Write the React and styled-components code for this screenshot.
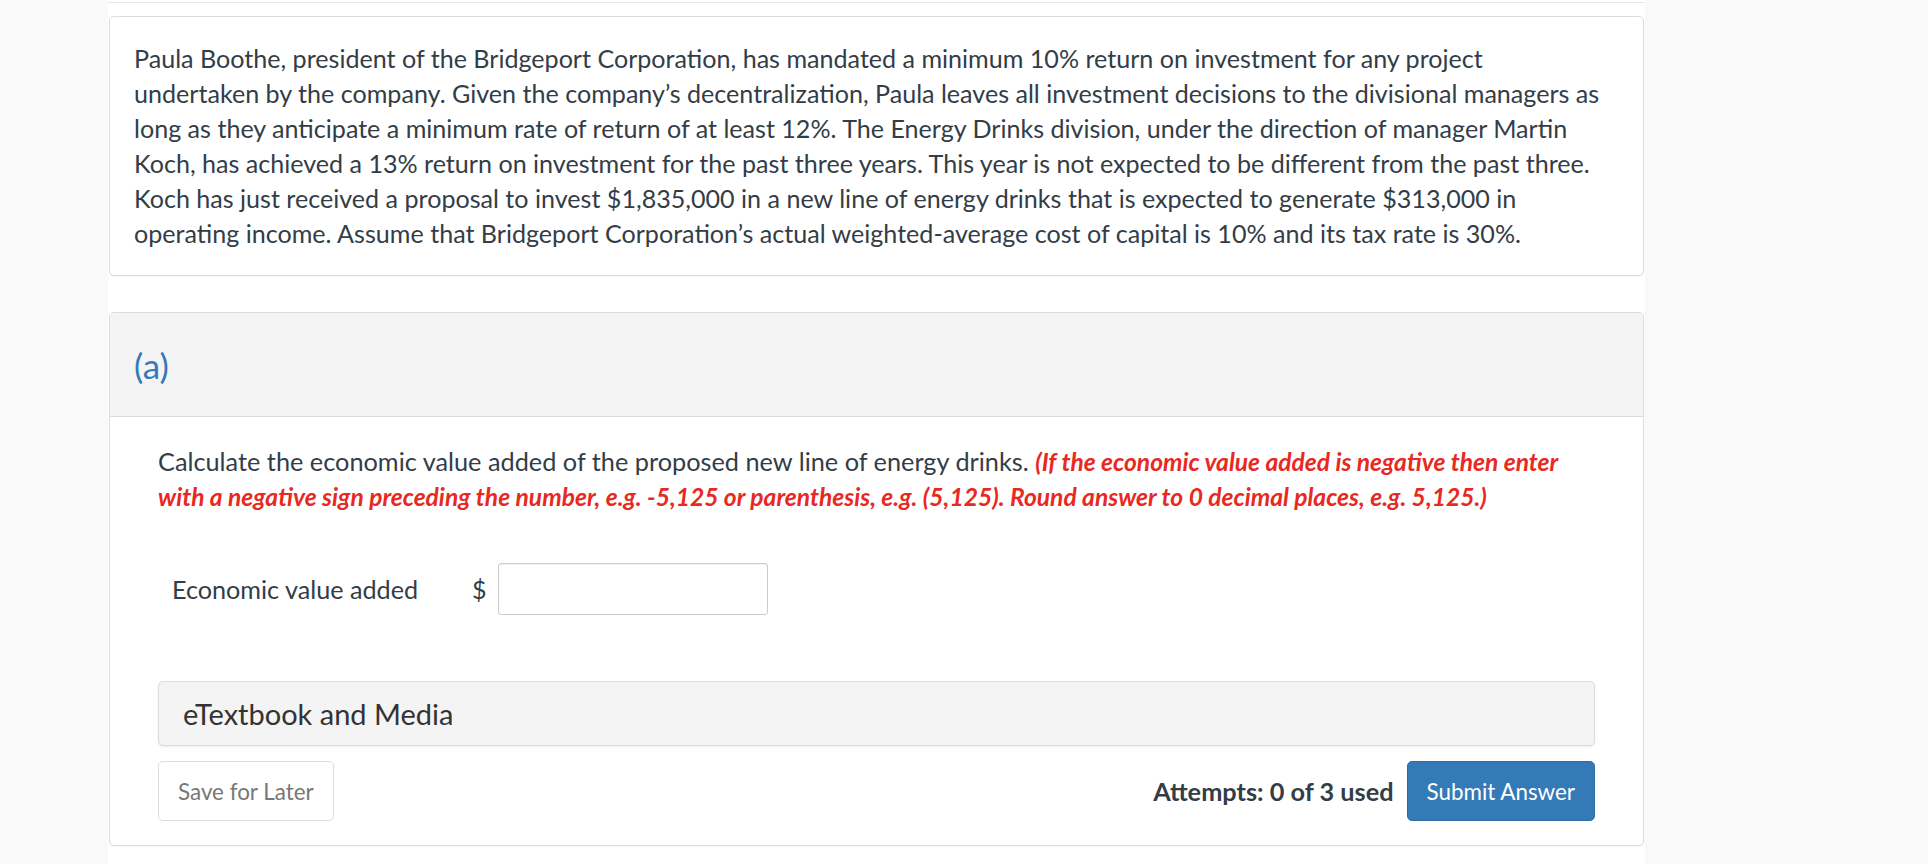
import React from "react";
import styled, { createGlobalStyle } from "styled-components";

const Global = createGlobalStyle`
  html, body { margin: 0; padding: 0; }
  body {
    background: #f9f9f9;
    font-family: Lato, "Open Sans", sans-serif;
    color: #333d47;
  }
`;

const Page = styled.div`
  display: flex;
  padding-left: 108px;
  min-height: 864px;
`;

const Column = styled.main`
  width: 1537px;
  background: #ffffff;
  display: flex;
  flex-direction: column;
  padding-bottom: 40px;
`;

const TopRule = styled.div`
  height: 2px;
  border-bottom: 1px solid #e8e8e8;
  margin-bottom: 13px;
`;

const Card = styled.section`
  margin: 0 1px;
  border: 1px solid #dcdcdc;
  border-radius: 5px;
  background: #fff;
  box-shadow: 0 1px 1px rgba(0, 0, 0, 0.04);
`;

const Question = styled(Card)`
  padding: 24px 32px 24px 24px;
`;

const Paragraph = styled.p`
  margin: 0;
  font-size: 25.1px;
  line-height: 35px;
  color: #333d47;
`;

const Part = styled(Card)`
  margin-top: 36px;
  overflow: hidden;
`;

const PartHeader = styled.header`
  height: 103px;
  display: flex;
  align-items: center;
  padding: 0 24px;
  background: #f4f4f4;
  border-bottom: 1px solid #dcdcdc;
`;

const PartLabel = styled.h3`
  margin: 0;
  font-weight: 400;
  font-size: 35px;
  color: #337ab7;
`;

const PartBody = styled.div`
  padding: 27px 48px 24px 48px;
  display: flex;
  flex-direction: column;
`;

const Instruction = styled.p`
  margin: 0;
  font-size: 25.3px;
  line-height: 35px;
  color: #333d47;
`;

const Hint = styled.em`
  font-size: 24.6px;
  font-weight: 700;
  font-style: italic;
  color: #e8291f;
`;

const AnswerRow = styled.div`
  display: flex;
  align-items: center;
  margin-top: 49px;
  padding-left: 14px;
`;

const FieldLabel = styled.label`
  font-size: 25.2px;
  color: #333d47;
  width: 300px;
`;

const Currency = styled.span`
  font-size: 25px;
  color: #333d47;
  margin-right: 11px;
`;

const Input = styled.input`
  box-sizing: border-box;
  width: 270px;
  height: 52px;
  border: 1px solid #cccccc;
  border-radius: 3px;
  box-shadow: inset 0 1px 1px rgba(0, 0, 0, 0.06);
  font-family: inherit;
  font-size: 24px;
  padding: 0 12px;
  outline: none;
`;

const MediaBar = styled.div`
  box-sizing: border-box;
  margin-top: 66px;
  height: 65px;
  display: flex;
  align-items: center;
  padding: 0 24px;
  background: #f4f4f4;
  border: 1px solid #dddddd;
  border-radius: 5px;
  box-shadow: 0 1px 2px rgba(0, 0, 0, 0.08);
  font-size: 29px;
  color: #333333;
`;

const Footer = styled.div`
  display: flex;
  align-items: center;
  margin-top: 15px;
`;

const Button = styled.button`
  box-sizing: border-box;
  height: 60px;
  padding: 0 19px;
  border-radius: 5px;
  font-family: Lato, "Open Sans", sans-serif;
  font-size: 22.4px;
  cursor: pointer;
  border: 1px solid ${(p) => (p.$primary ? "#2e6da4" : "#dddddd")};
  background: ${(p) => (p.$primary ? "#337ab7" : "#ffffff")};
  color: ${(p) => (p.$primary ? "#ffffff" : "#777777")};
`;

const Spacer = styled.div`
  flex: 1;
`;

const Attempts = styled.span`
  font-size: 25.3px;
  font-weight: 700;
  color: #333d47;
  margin-right: 13px;
`;

export default function App() {
  return (
    <>
      <Global />
      <Page>
        <Column>
          <TopRule />
          <Question>
            <Paragraph>
              Paula Boothe, president of the Bridgeport Corporation, has mandated a minimum 10% return on
              investment for any project undertaken by the company. Given the company’s decentralization, Paula
              leaves all investment decisions to the divisional managers as long as they anticipate a minimum
              rate of return of at least 12%. The Energy Drinks division, under the direction of manager Martin
              Koch, has achieved a 13% return on investment for the past three years. This year is not expected
              to be different from the past three. Koch has just received a proposal to invest $1,835,000 in a
              new line of energy drinks that is expected to generate $313,000 in operating income. Assume that
              Bridgeport Corporation’s actual weighted-average cost of capital is 10% and its tax rate is 30%.
            </Paragraph>
          </Question>
          <Part>
            <PartHeader>
              <PartLabel>(a)</PartLabel>
            </PartHeader>
            <PartBody>
              <Instruction>
                Calculate the economic value added of the proposed new line of energy drinks.{" "}
                <Hint>
                  (If the economic value added is negative then enter with a negative sign preceding the number,
                  e.g. -5,125 or parenthesis, e.g. (5,125). Round answer to 0 decimal places, e.g. 5,125.)
                </Hint>
              </Instruction>
              <AnswerRow>
                <FieldLabel htmlFor="eva">Economic value added</FieldLabel>
                <Currency>$</Currency>
                <Input id="eva" type="text" />
              </AnswerRow>
              <MediaBar>eTextbook and Media</MediaBar>
              <Footer>
                <Button type="button">Save for Later</Button>
                <Spacer />
                <Attempts>Attempts: 0 of 3 used</Attempts>
                <Button type="button" $primary>
                  Submit Answer
                </Button>
              </Footer>
            </PartBody>
          </Part>
        </Column>
      </Page>
    </>
  );
}
